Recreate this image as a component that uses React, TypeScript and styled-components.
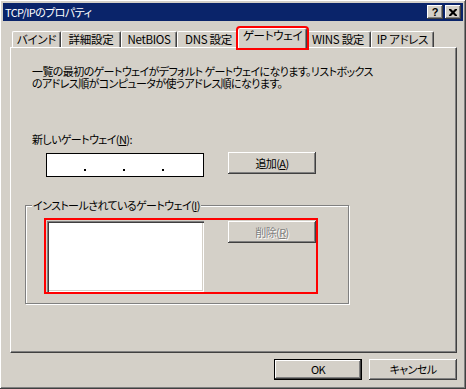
import styled, { createGlobalStyle, css } from 'styled-components';

const GlobalStyle = createGlobalStyle`
  html, body {
    margin: 0;
    padding: 0;
    background: #d4d0c8;
  }
  body {
    font-family: "Noto Sans CJK JP", "Noto Sans", sans-serif;
    font-size: 11px;
    letter-spacing: -0.6px;
    font-feature-settings: "palt";
    color: #000;
  }
`;

// タブの幅 (表示順)
const tabs = [
    { label: 'バインド', width: 49 },
    { label: '詳細設定', width: 60 },
    { label: 'NetBIOS', width: 56 },
    { label: 'DNS 設定', width: 63 },
    { label: 'ゲートウェイ', width: 69, active: true },
    { label: 'WINS 設定', width: 66 },
    { label: 'IP アドレス', width: 63 },
];

const App = () => {
    return (
        <>
            <GlobalStyle />
            <Window>
                <TitleBar>
                    <TitleText>TCP/IPのプロパティ</TitleText>
                    <TitleButtons>
                        <TitleButton>
                            <HelpMark>?</HelpMark>
                        </TitleButton>
                        <TitleButton>
                            <svg width="8" height="7" viewBox="0 0 8 7">
                                <path d="M0 0h2l2 2 2-2h2v1l-2.5 2.5L8 6v1H6L4 5 2 7H0V6l2.5-2.5L0 1z" fill="#000" />
                            </svg>
                        </TitleButton>
                    </TitleButtons>
                </TitleBar>

                <Body>
                    <TabStrip>
                        {tabs.map(t => (
                            <Tab key={t.label} $width={t.width} $active={t.active}>
                                {t.label}
                            </Tab>
                        ))}
                    </TabStrip>

                    <Panel>
                        <Description>
                            <DescLine>一覧の最初のゲートウェイがデフォルト ゲートウェイになります。リストボックス</DescLine>
                            <DescLine>のアドレス順がコンピュータが使うアドレス順になります。</DescLine>
                        </Description>

                        <FieldLabel>新しいゲートウェイ(<u>N</u>):</FieldLabel>

                        <InputRow>
                            <IpField>
                                <IpSegment />
                                <IpDot />
                                <IpSegment />
                                <IpDot />
                                <IpSegment />
                                <IpDot />
                                <IpSegment />
                            </IpField>
                            <PushButton $gap={24} $height={22}>追加(<u>A</u>)</PushButton>
                        </InputRow>

                        <Group>
                            <Legend>インストールされているゲートウェイ(<u>I</u>)</Legend>
                            <Highlight>
                                <ListBox />
                                <PushButton $gap={24} $height={22} disabled>削除(<u>R</u>)</PushButton>
                            </Highlight>
                        </Group>
                    </Panel>
                </Body>

                <Footer>
                    <PushButton $height={21} $default>OK</PushButton>
                    <PushButton $height={21}>キャンセル</PushButton>
                </Footer>
            </Window>
        </>
    );
};

export default App;

// styled-components

const raised = css`
    box-shadow:
        inset -1px -1px #404040,
        inset 1px 1px #fff,
        inset -2px -2px #808080,
        inset 2px 2px #d4d0c8;
`;

const sunken = css`
    box-shadow:
        inset 1px 1px #808080,
        inset 2px 2px #404040,
        inset -1px -1px #fff,
        inset -2px -2px #d4d0c8;
`;

const Window = styled.div`
    box-sizing: border-box;
    width: 466px;
    height: 389px;
    padding: 3px 3px 0 3px;
    background: #d4d0c8;
    display: flex;
    flex-direction: column;
    ${raised};
`;

const TitleBar = styled.div`
    height: 18px;
    padding: 0 2px;
    display: flex;
    align-items: center;
    background: #0a246a;
    color: #fff;
`;

const TitleText = styled.span`
    flex: 1;
    line-height: 13px;
    white-space: nowrap;
`;

const TitleButtons = styled.div`
    display: flex;
    gap: 2px;
`;

const TitleButton = styled.div`
    box-sizing: border-box;
    width: 16px;
    height: 14px;
    display: flex;
    align-items: center;
    justify-content: center;
    background: #d4d0c8;
    ${raised};
`;

const HelpMark = styled.span`
    font-family: "Liberation Sans", Arial, sans-serif;
    font-weight: bold;
    font-size: 11px;
    line-height: 11px;
    letter-spacing: 0;
    color: #000;
`;

const Body = styled.div`
    padding: 7px 6px 0 7px;
`;

const TabStrip = styled.div`
    height: 19px;
    padding-left: 2px;
    display: flex;
    align-items: flex-end;
`;

const Tab = styled.div<{ $width: number; $active?: boolean }>`
    box-sizing: border-box;
    width: ${p => p.$width}px;
    height: 16px;
    display: flex;
    align-items: center;
    justify-content: center;
    border-top: 1px solid #fff;
    border-left: 1px solid #fff;
    border-right: 1px solid #404040;
    border-radius: 2px 2px 0 0;
    box-shadow: inset -1px 0 #808080;
    font-size: 11.5px;
    letter-spacing: -0.3px;
    line-height: 13px;
    white-space: nowrap;

    ${p => p.$active && css`
        height: 20px;
        margin: 0 -2px -1px;
        align-items: flex-start;
        position: relative;
        z-index: 1;
        background: #d4d0c8;
        outline: 2px solid #f00;
    `}
`;

const Panel = styled.div`
    box-sizing: border-box;
    height: 306px;
    padding: 17px 0 0 14px;
    display: flex;
    flex-direction: column;
    align-items: flex-start;
    border-top: 1px solid #fff;
    border-left: 1px solid #fff;
    border-right: 1px solid #404040;
    border-bottom: 1px solid #404040;
    box-shadow: inset -1px -1px #808080;
`;

const Description = styled.div`
    margin: 0 0 0 7px;
    display: flex;
    flex-direction: column;
`;

const DescLine = styled.span`
    height: 12px;
    line-height: 12px;
    white-space: nowrap;
`;

const FieldLabel = styled.div`
    margin: 44px 0 0 7px;
    line-height: 12px;
    white-space: nowrap;
`;

const InputRow = styled.div`
    margin: 7px 0 0 21px;
    display: flex;
    align-items: flex-start;
`;

const IpField = styled.div`
    box-sizing: border-box;
    width: 158px;
    height: 24px;
    margin-top: 1px;
    display: flex;
    align-items: flex-start;
    background: #fff;
    border: 1px solid #000;
`;

const IpSegment = styled.span`
    width: 37px;
`;

const IpDot = styled.span`
    width: 2px;
    height: 2px;
    margin-top: 15px;
    background: #000;
`;

const PushButton = styled.button<{ $gap?: number; $height: number; $default?: boolean }>`
    box-sizing: border-box;
    width: 88px;
    height: ${p => p.$height}px;
    margin: 0 0 0 ${p => p.$gap ?? 0}px;
    padding: 0;
    font: inherit;
    letter-spacing: inherit;
    line-height: 13px;
    color: #000;
    background: #d4d0c8;
    border: ${p => (p.$default ? '1px solid #000' : 'none')};
    border-radius: 0;
    ${raised};

    &:disabled {
        color: #808080;
        text-shadow: 1px 1px #fff;
    }
`;

const Group = styled.fieldset`
    box-sizing: border-box;
    width: 324px;
    min-width: 0;
    margin: 22px 0 0 0;
    padding: 0;
    border: 1px solid #808080;
    box-shadow: inset 1px 1px #fff, 1px 1px #fff;
`;

const Legend = styled.legend`
    margin-left: 6px;
    padding: 0 1px;
    line-height: 13px;
    white-space: nowrap;
    background: #d4d0c8;
`;

const Highlight = styled.div`
    width: max-content;
    margin: 6px 0 9px 18px;
    padding: 1px 0 0 1px;
    display: flex;
    align-items: flex-start;
    border: 2px solid #f00;
`;

const ListBox = styled.div`
    width: 157px;
    height: 71px;
    background: #fff;
    ${sunken};
`;

const Footer = styled.div`
    margin: 6px 6px 0 0;
    display: flex;
    justify-content: flex-end;
    gap: 7px;
`;
